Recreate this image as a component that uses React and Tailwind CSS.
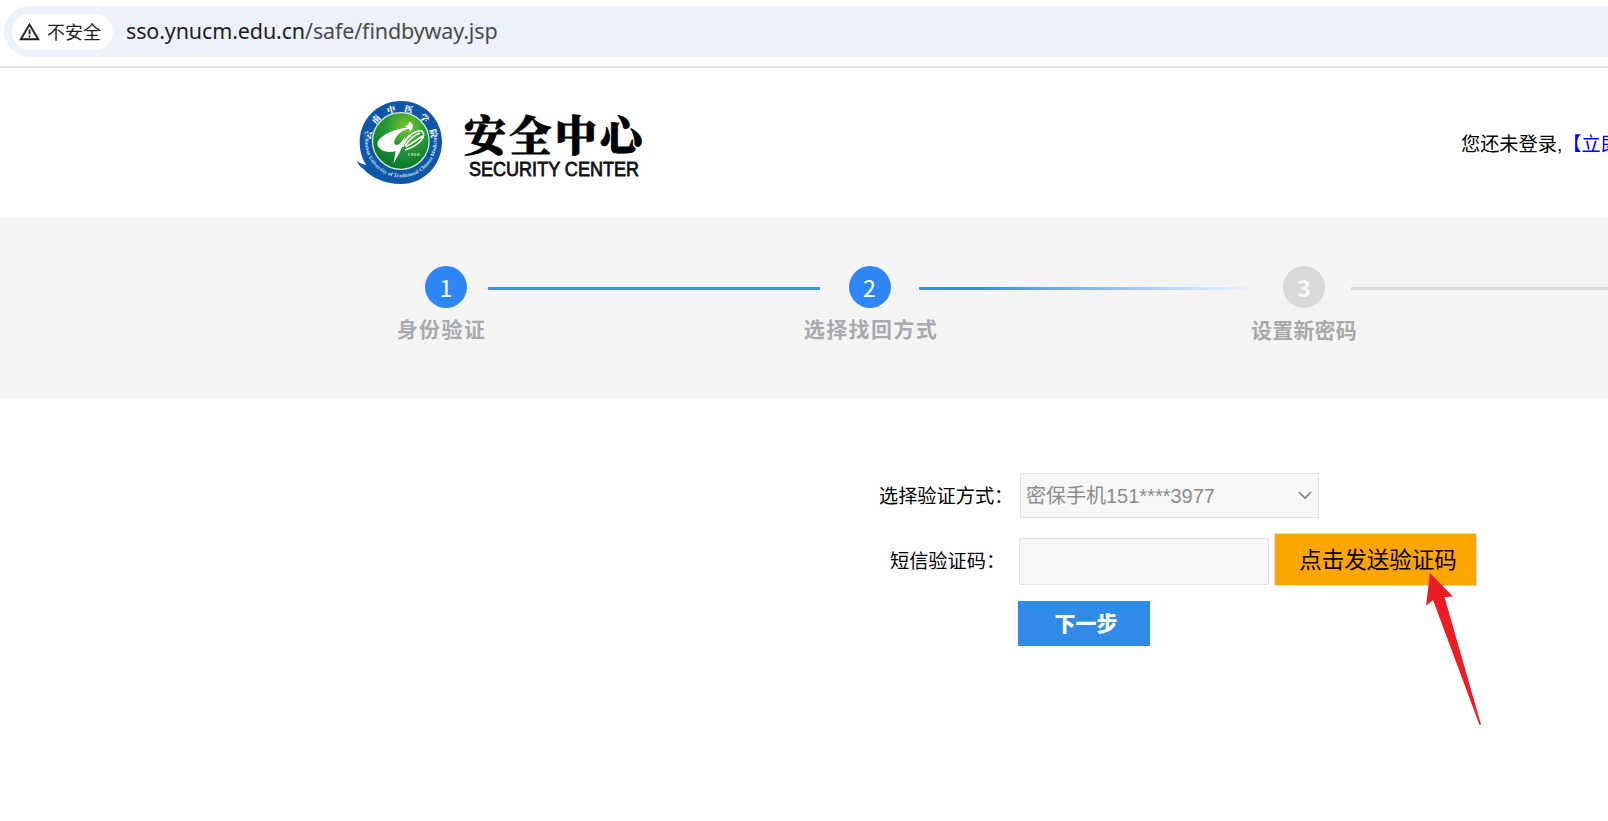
import React from "react";

const CJK = "font-['Liberation_Sans','Noto_Sans_CJK_SC',sans-serif]";

function AddressBar() {
  return (
    <div className="h-[66px] pt-[6px] pl-1">
      <div className="flex h-[51px] items-center rounded-l-full bg-[#ecf1fa] pl-2">
        <div className="flex h-9 w-[101px] items-center rounded-full bg-white pl-[7px]">
          <svg className="h-[18px] w-[21px]" viewBox="0 0 21 18" fill="none">
            <path d="M10.5 1.6 L19.2 16.2 H1.8 Z" stroke="#1f1f1f" strokeWidth="1.9" />
            <path d="M10.5 6.5 V11.2 M10.5 12.6 V14.4" stroke="#1f1f1f" strokeWidth="1.8" />
          </svg>
          <span className="ml-[7px] h-[36px] whitespace-nowrap text-[18px] leading-[34px] text-[#1f1f1f] font-['Noto_Sans_CJK_SC',sans-serif]">
            不安全
          </span>
        </div>
        <div className="ml-[13px] h-[38px] whitespace-nowrap text-[21.5px] leading-[36px] tracking-[-0.13px] text-[#4a4a4a] font-['Noto_Sans',sans-serif]">
          <span className="text-[#1f1f1f]">sso.ynucm.edu.cn</span>/safe/findbyway.jsp
        </div>
      </div>
    </div>
  );
}

function Logo() {
  return (
    <svg className="h-[100px] w-[300px] shrink-0" viewBox="350 92 300 100">
      <defs>
        <radialGradient id="leaf" cx="0.6" cy="0.25" r="0.8">
          <stop offset="0" stopColor="#7cc62c" />
          <stop offset="0.45" stopColor="#259a36" />
          <stop offset="1" stopColor="#03722f" />
        </radialGradient>
        <path id="ringTop" d="M370.5 142 A30.5 30.5 0 0 1 431.5 142" />
        <path id="ringBottom" d="M366 134 A35.8 35.8 0 1 0 436 134" />
      </defs>
      <path
        d="M401 101 C424 101 442 119 442 142 C442 165 424 184 401 184 C384 184 371 177 364 169.500 C360 166.500 357.500 164 357 160.800 C359.500 163 362 164.300 366.300 165 C362 158.500 359.700 151 359.700 142 C359.700 119 378 101 401 101 Z"
        fill="#0e57a8"
      />
      <circle cx="400.800" cy="141" r="28.300" fill="url(#leaf)" stroke="#d8ecd2" strokeWidth="1.300" />
      <path
        d="M410 128 C398 127 379 135 377.500 143 C377 150 387 154 396 151 C402 149 405 144 406 138 C403 142 400 145 396 145 C393 144 394 140 397 136 C400 132 404 130 410 128 Z"
        fill="#fff"
      />
      <path d="M405 137 C403 147 398 156 393.500 163.500 C395 156 395 152 397 147 Z" fill="#fff" />
      <path d="M405 127 C407 125 409 125 409.500 121.500 C411 123 414 124 412.500 128 L410.500 132 C410 129 408 128 405 127 Z" fill="#fff" />
      <path
        d="M403 147 C404 139 413 130 422 131 C427 136 420 145 405 150 M405 146 C409 140 414 135 420 133 M406 147 C412 143 418 139 423 136 M404 144 C406 139 410 135 415 132"
        fill="none"
        stroke="#fff"
        strokeWidth="1.500"
      />
      <text x="407.500" y="156" fontSize="5" fill="#cfe8c8" fontFamily="Liberation Serif, serif" fontWeight="bold" textLength="12">
        1960
      </text>
      <text fontSize="8.500" fill="#fff" fontFamily="Noto Serif CJK SC, Noto Sans CJK SC, serif" fontWeight="900">
        <textPath href="#ringTop" startOffset="2" textLength="90">
          云南中医学院
        </textPath>
      </text>
      <text fontSize="5.200" fill="#d9e6f5" fontFamily="Liberation Serif, serif" fontWeight="bold">
        <textPath href="#ringBottom" startOffset="4" textLength="122">
          Yunnan University of Traditional Chinese Medicine
        </textPath>
      </text>
      <text
        x="464"
        y="150.500"
        fontSize="42"
        fontWeight="900"
        fill="#000"
        stroke="#000"
        strokeWidth="0.800"
        fontFamily="Noto Serif CJK SC, Noto Sans CJK SC, serif"
        textLength="178"
      >
        安全中心
      </text>
      <text
        x="469"
        y="175.500"
        fontSize="20"
        fill="#111"
        stroke="#111"
        strokeWidth="0.800"
        fontFamily="Liberation Sans, sans-serif"
        textLength="170"
        lengthAdjust="spacingAndGlyphs"
      >
        SECURITY CENTER
      </text>
    </svg>
  );
}

function Header() {
  return (
    <header className="flex h-[150px] items-start overflow-hidden pt-6 pl-[350px]">
      <Logo />
      <div className={`ml-[811px] mt-[38px] shrink-0 whitespace-nowrap text-[19.2px] leading-[30px] text-black ${CJK}`}>
        您还未登录,<a className="text-[#0000ff]">【立即</a>
      </div>
    </header>
  );
}

function Step({ number, label, circle, wrap, text }) {
  return (
    <div className={`flex shrink-0 flex-col items-center ${wrap}`}>
      <div className={`flex size-[42px] items-center justify-center rounded-full ${circle}`}>{number}</div>
      <div className={`whitespace-nowrap font-['Noto_Sans_CJK_SC',sans-serif] ${text}`}>{label}</div>
    </div>
  );
}

function Steps() {
  return (
    <section className="flex h-[180px] items-start overflow-hidden bg-[#f4f4f4] pt-12">
      <Step
        number="1"
        label="身份验证"
        wrap="ml-[396px] w-[92px] pl-[8px]"
        circle="bg-[#2f86f6] text-[23px] text-white font-['Noto_Sans_CJK_SC',sans-serif]"
        text="mt-[4px] -ml-[9px] text-[21px] font-bold leading-[32px] tracking-[1.4px] text-[#a9a9ae]"
      />
      <div className="mt-[21px] h-[3px] w-[332px] shrink-0 bg-[#3f8ef8]" />
      <Step
        number="2"
        label="选择找回方式"
        wrap="-ml-[18px] w-[135px]"
        circle="bg-[#2f86f6] text-[23px] text-white font-['Noto_Sans_CJK_SC',sans-serif]"
        text="mt-[4px] ml-[3px] text-[21px] font-bold leading-[32px] tracking-[1.4px] text-[#a9a9ae]"
      />
      <div className="-ml-[18px] mt-[21px] h-[3px] w-[330px] shrink-0 bg-linear-to-r from-[#3a8bf8] from-20% to-[#eef1f5]" />
      <Step
        number="3"
        label="设置新密码"
        wrap="ml-[2px] w-[106px]"
        circle="bg-[#d9d9d9] text-[23px] font-bold text-[#f8f8f8] font-['Noto_Sans_CJK_SC',sans-serif]"
        text="mt-[5px] text-[21px] font-bold leading-[32px] tracking-[0.2px] text-[#a8a8a8]"
      />
      <div className="-ml-[6px] mt-[21px] h-[3px] flex-1 bg-[#d9d9d9]" />
    </section>
  );
}

function RecoveryForm() {
  return (
    <main className={`relative h-[423px] pt-[75px] ${CJK}`}>
      <div className="flex h-[45px] items-center pl-[879px]">
        <label className="w-[141px] whitespace-nowrap pt-[3px] text-[19.2px] text-black">选择验证方式：</label>
        <div className="flex h-[45px] w-[299px] items-center justify-between border border-[#e2e2e2] bg-[#f7f7f7] pl-[5px] pr-[6px]">
          <span className="text-[20px] leading-[30px] text-[#8c8c8c]">密保手机151****3977</span>
          <svg className="h-[9px] w-[14px]" viewBox="0 0 14 9" fill="none">
            <path d="M1 1 L7 7.200 L13 1" stroke="#858585" strokeWidth="1.700" />
          </svg>
        </div>
      </div>
      <div className="mt-[15px] flex h-[53px] items-start pl-[890px]">
        <label className="w-[129px] whitespace-nowrap pt-[14px] text-[19.2px] leading-[30px] text-black">短信验证码：</label>
        <div className="mt-[5px] h-[47px] w-[250px] border border-[#e2e2e2] bg-[#f7f7f7]" />
        <button className="ml-[5px] h-[53px] w-[203px] border border-[#e0e0e0] bg-[#ffa500] pl-[5px] pt-[2px] text-[22.5px] text-black">
          点击发送验证码
        </button>
      </div>
      <button className="ml-[1018px] mt-[15px] block h-[45px] w-[132px] bg-[#2f8be6] pl-[4px] text-[21px] font-black leading-[43px] text-white">
        下一步
      </button>
      <svg className="absolute left-[1425px] top-[175px] h-[154px] w-[58px]" viewBox="1425 573 58 154">
        <path d="M1430 573 L1453 596.500 L1444.500 597 L1481 724.500 L1479.500 725 L1433 600 L1426 605.800 Z" fill="#ee1c25" />
      </svg>
    </main>
  );
}

export default function App() {
  return (
    <div className="h-[821px] w-[1608px] overflow-hidden bg-white">
      <AddressBar />
      <div className="h-[2px] bg-[#e1e1e1]" />
      <Header />
      <Steps />
      <RecoveryForm />
    </div>
  );
}
